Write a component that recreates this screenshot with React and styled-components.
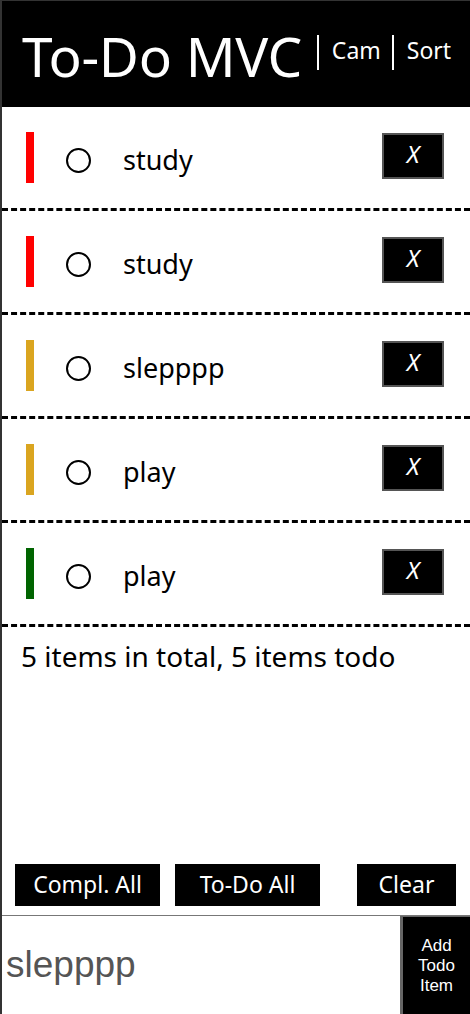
import React from 'react';
import styled, { createGlobalStyle } from 'styled-components';

const GlobalStyle = createGlobalStyle`
  html, body {
    margin: 0;
    padding: 0;
    background: #fff;
  }
  * {
    box-sizing: border-box;
  }
`;

const Page = styled.div`
  width: 470px;
  height: 1014px;
  display: flex;
  flex-direction: column;
  border-left: 2px solid #333;
  border-top: 1px solid #333;
  font-family: "Noto Sans", "Open Sans", sans-serif;
  overflow: hidden;
`;

const Header = styled.header`
  height: 106px;
  flex-shrink: 0;
  background: #000;
  color: #fff;
  display: flex;
  align-items: center;
  padding-left: 20px;
`;

const Title = styled.h1`
  margin: 0;
  font-size: 55px;
  font-weight: 400;
  letter-spacing: -0.3px;
  line-height: 1;
  padding-top: 2px;
`;

const NavLink = styled.span`
  display: flex;
  align-items: center;
  height: 35px;
  margin-left: 15px;
  padding-left: 13px;
  border-left: 2px solid #fff;
  font-size: 23px;
  line-height: 1;
  padding-bottom: 4px;
  margin-bottom: 4px;
  & + & {
    margin-left: 11px;
  }
`;

const List = styled.ul`
  list-style: none;
  margin: 0;
  padding: 0;
`;

const Row = styled.li`
  height: 104px;
  display: flex;
  align-items: center;
  padding: 0 26px 0 24px;
  border-bottom: 3px dashed #000;
`;

const Bar = styled.span`
  width: 8px;
  height: 51px;
  background: ${(p) => p.$color};
  flex-shrink: 0;
`;

const Check = styled.span`
  width: 25px;
  height: 25px;
  border: 2.5px solid #000;
  border-radius: 50%;
  margin: 5px 0 0 32px;
  flex-shrink: 0;
`;

const Label = styled.span`
  margin-left: 32px;
  font-size: 27px;
  color: #000;
  flex: 1;
  padding-top: 4px;
`;

const RemoveButton = styled.button`
  width: 62px;
  height: 46px;
  margin-bottom: 4px;
  background: #000;
  border: 2px solid #555;
  color: #fff;
  font-family: "Noto Sans", sans-serif;
  font-style: italic;
  font-size: 24px;
  padding: 0 0 4px;
  cursor: pointer;
`;

const Summary = styled.p`
  margin: 10px 0 0 19px;
  font-size: 28px;
  color: #000;
`;

const Spacer = styled.div`
  flex: 1;
`;

const Actions = styled.div`
  display: flex;
  padding: 0 0 0 13px;
  margin-bottom: 9px;
`;

const ActionButton = styled.button`
  height: 42px;
  width: ${(p) => p.$width}px;
  margin-left: ${(p) => p.$gap}px;
  background: #000;
  color: #fff;
  border: none;
  font-family: "Noto Sans", sans-serif;
  font-size: 23px;
  padding: 0 0 3px;
  cursor: pointer;
`;

const InputRow = styled.form`
  height: 99px;
  display: flex;
  border-top: 1px solid #777;
  flex-shrink: 0;
`;

const TodoInput = styled.input`
  width: 398px;
  height: 100%;
  border: none;
  outline: none;
  padding: 0 0 0 4px;
  font-family: "Liberation Sans", Arial, sans-serif;
  font-size: 37px;
  color: #555;
  background: #fff;
`;

const AddButton = styled.button`
  flex: 1;
  height: 100%;
  background: #000;
  color: #fff;
  border: none;
  border-left: 3px solid #666;
  border-top: 1px solid #666;
  font-family: "Liberation Sans", Arial, sans-serif;
  font-size: 17px;
  line-height: 20px;
  padding: 0;
  cursor: pointer;
`;

const todos = [
  { text: 'study', color: '#ff0000' },
  { text: 'study', color: '#ff0000' },
  { text: 'slepppp', color: '#daa520' },
  { text: 'play', color: '#daa520' },
  { text: 'play', color: '#006400' },
];

export default function App() {
  return (
    <>
      <GlobalStyle />
      <Page>
        <Header>
          <Title>To-Do MVC</Title>
          <NavLink>Cam</NavLink>
          <NavLink>Sort</NavLink>
        </Header>
        <List>
          {todos.map((t, i) => (
            <Row key={i}>
              <Bar $color={t.color} />
              <Check />
              <Label>{t.text}</Label>
              <RemoveButton type="button">X</RemoveButton>
            </Row>
          ))}
        </List>
        <Summary>5 items in total, 5 items todo</Summary>
        <Spacer />
        <Actions>
          <ActionButton type="button" $width={145} $gap={0}>Compl. All</ActionButton>
          <ActionButton type="button" $width={145} $gap={15}>To-Do All</ActionButton>
          <ActionButton type="button" $width={99} $gap={37}>Clear</ActionButton>
        </Actions>
        <InputRow onSubmit={(e) => e.preventDefault()}>
          <TodoInput defaultValue="slepppp" />
          <AddButton type="submit">Add<br />Todo<br />Item</AddButton>
        </InputRow>
      </Page>
    </>
  );
}
